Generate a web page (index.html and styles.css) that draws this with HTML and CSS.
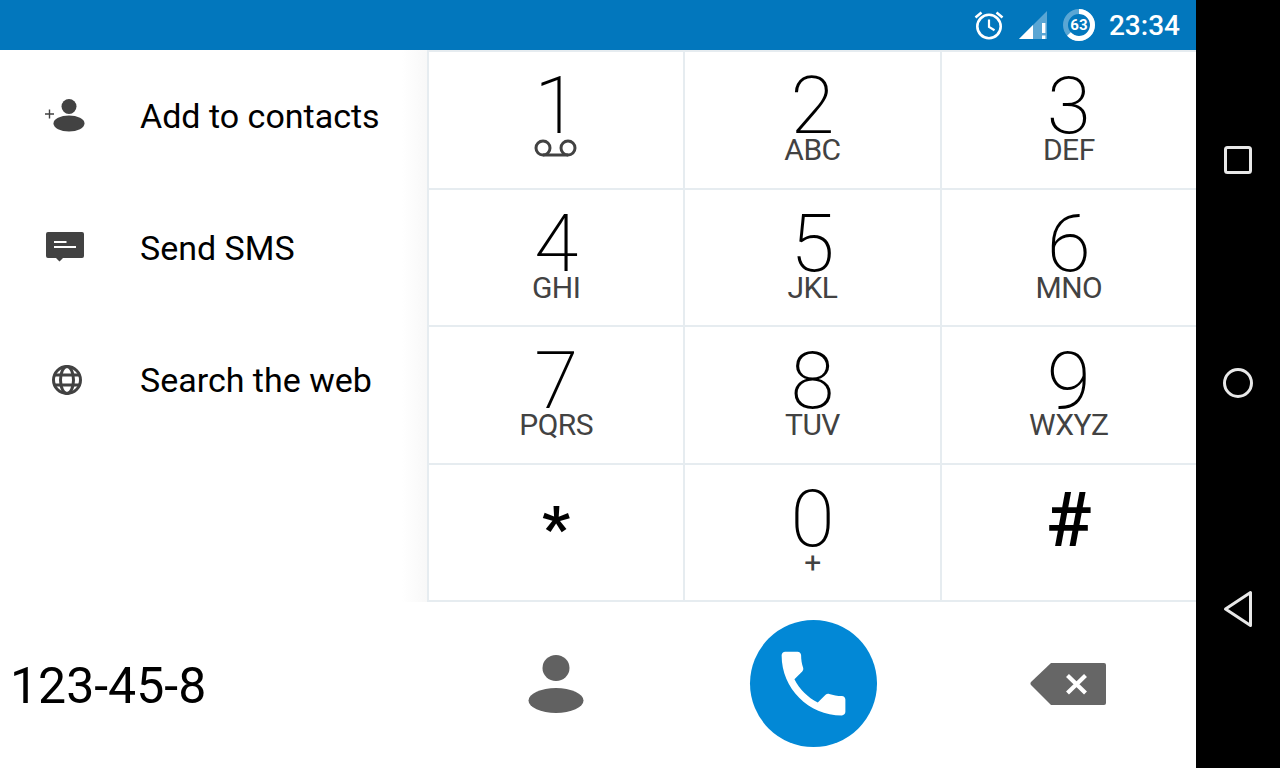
FILE: index.html
```html
<!DOCTYPE html>
<html lang="en">
<head>
    <meta charset="UTF-8">
    <meta name="viewport" content="width=device-width, initial-scale=1.0">
    <title>Dialer</title>
    <link rel="stylesheet" href="styles.css">
</head>
<body>
    <div class="screen">
        <div class="status-bar">
            <svg class="status-icon" width="30" height="32" viewBox="1 0 30 32">
                <circle cx="16" cy="17.5" r="11.7" fill="none" stroke="#fff" stroke-width="2.6"/>
                <path d="M16 10.5V18l5.5 3.3" fill="none" stroke="#fff" stroke-width="2.2"/>
                <path d="M2.5 8.5 8.5 3.5M29.5 8.5l-6-5" fill="none" stroke="#fff" stroke-width="2.6"/>
            </svg>
            <svg class="status-icon signal" width="30" height="30" viewBox="0 0 30 30">
                <path d="M1 29 29 1v28z" fill="#fff" opacity="0.35"/>
                <path d="M1 29 15 15v14z" fill="#fff"/>
                <path d="M24 13h3.4v10H24zM24 25.4h3.4V29H24z" fill="#fff"/>
            </svg>
            <div class="battery">
                <svg width="32" height="32" viewBox="0 0 32 32">
                    <circle cx="16" cy="16" r="13.5" fill="none" stroke="#fff" stroke-opacity="0.35" stroke-width="5"/>
                    <circle cx="16" cy="16" r="13.5" fill="none" stroke="#fff" stroke-width="5" stroke-dasharray="53.4 84.8" transform="rotate(-90 16 16)"/>
                </svg>
                <span class="battery-level">63</span>
            </div>
            <span class="clock">23:34</span>
        </div>
        <div class="content">
            <div class="actions">
                <div class="action">
                    <svg class="action-icon" width="40" height="36" viewBox="0 0 40 36">
                        <circle cx="24" cy="8.5" r="7.5" fill="#424242"/>
                        <ellipse cx="24" cy="25.5" rx="15.5" ry="8" fill="#424242"/>
                        <path d="M0 16h9M4.500 11.500v9" stroke="#424242" stroke-width="1.400"/>
                    </svg>
                    <span>Add to contacts</span>
                </div>
                <div class="action">
                    <svg class="action-icon" width="40" height="36" viewBox="0 0 40 36">
                        <path d="M3 2h34a2 2 0 0 1 2 2v22a2 2 0 0 1-2 2H18l-3.500 3.500-3.500-3.500H3a2 2 0 0 1-2-2V4a2 2 0 0 1 2-2z" fill="#424242"/>
                        <path d="M9 12h12.500M9 17h22" stroke="#fff" stroke-width="1.800"/>
                    </svg>
                    <span>Send SMS</span>
                </div>
                <div class="action">
                    <svg class="action-icon" width="40" height="36" viewBox="0 0 40 36">
                        <g fill="none" stroke="#424242" stroke-width="3">
                            <circle cx="22" cy="18" r="13.500"/>
                            <ellipse cx="22" cy="18" rx="6.500" ry="13.500"/>
                            <path d="M9.500 13h25M9.500 23h25"/>
                        </g>
                    </svg>
                    <span>Search the web</span>
                </div>
            </div>
            <div class="keypad">
                <div class="key">
                    <span class="digit">1</span>
                    <svg class="voicemail" width="44" height="20" viewBox="0 0 44 20">
                        <g fill="none" stroke="#424242" stroke-width="3">
                            <circle cx="9" cy="10" r="7"/>
                            <circle cx="34" cy="10" r="7"/>
                            <path d="M9 17h25"/>
                        </g>
                    </svg>
                </div>
                <div class="key"><span class="digit">2</span><span class="letters">ABC</span></div>
                <div class="key"><span class="digit">3</span><span class="letters">DEF</span></div>
                <div class="key"><span class="digit">4</span><span class="letters">GHI</span></div>
                <div class="key"><span class="digit">5</span><span class="letters">JKL</span></div>
                <div class="key"><span class="digit">6</span><span class="letters">MNO</span></div>
                <div class="key"><span class="digit">7</span><span class="letters">PQRS</span></div>
                <div class="key"><span class="digit">8</span><span class="letters">TUV</span></div>
                <div class="key"><span class="digit">9</span><span class="letters">WXYZ</span></div>
                <div class="key"><span class="star">*</span></div>
                <div class="key"><span class="digit">0</span><span class="letters">+</span></div>
                <div class="key"><span class="hash">#</span></div>
            </div>
        </div>
        <div class="bottom-bar">
            <div class="number">123-45-8</div>
            <div class="bottom-buttons">
                <div class="bottom-btn">
                    <svg width="56" height="58" viewBox="0 0 56 58">
                        <ellipse cx="28" cy="13" rx="13.500" ry="13" fill="#616161"/>
                        <ellipse cx="28" cy="45.500" rx="27.500" ry="12.500" fill="#616161"/>
                    </svg>
                </div>
                <div class="bottom-btn">
                    <div class="call-btn">
                        <svg width="85" height="85" viewBox="0 0 24 24">
                            <path d="M6.620 10.790c1.440 2.830 3.760 5.140 6.590 6.590l2.200-2.200c.27-.27.67-.36 1.020-.24 1.120.37 2.330.57 3.570.57.550 0 1 .45 1 1V20c0 .55-.45 1-1 1-9.390 0-17-7.610-17-17 0-.55.45-1 1-1h3.500c.55 0 1 .45 1 1 0 1.250.2 2.450.57 3.570.11.350.03.740-.25 1.020l-2.200 2.200z" fill="#fff"/>
                        </svg>
                    </div>
                </div>
                <div class="bottom-btn">
                    <svg width="76" height="44" viewBox="0 0 76 44">
                        <path d="M21 1h53a2 2 0 0 1 2 2v38a2 2 0 0 1-2 2H21L1 23a2.500 2.500 0 0 1 0-3z" fill="#666"/>
                        <path d="M37.500 13.500 55.500 31M55.500 13.500 37.500 31" stroke="#fff" stroke-width="4.200"/>
                    </svg>
                </div>
            </div>
        </div>
    </div>
    <div class="nav-bar">
        <svg width="30" height="30" viewBox="0 0 30 30">
            <rect x="2.500" y="2.500" width="25" height="25" rx="2" fill="none" stroke="#e8e8e8" stroke-width="3"/>
        </svg>
        <svg width="32" height="32" viewBox="0 0 32 32">
            <circle cx="16" cy="16" r="13.500" fill="none" stroke="#e8e8e8" stroke-width="3"/>
        </svg>
        <svg width="30" height="38" viewBox="0 0 30 38">
            <path d="M27.500 2.500v33L2.500 19z" fill="none" stroke="#e8e8e8" stroke-width="3" stroke-linejoin="round"/>
        </svg>
    </div>
</body>
</html>
```

FILE: styles.css
```css
body {
    margin: 0;
    width: 1280px;
    height: 768px;
    overflow: hidden;
    display: flex;
    font-family: Roboto, sans-serif;
    background-color: #fff;
}

.screen {
    width: 1196px;
    display: flex;
    flex-direction: column;
}

.status-bar {
    height: 50px;
    background-color: #0277bd;
    display: flex;
    justify-content: flex-end;
    align-items: center;
    padding-right: 16px;
    color: #fff;
}

.status-icon {
    margin-right: 14px;
}

.signal {
    margin-right: 15px;
}

.battery {
    width: 32px;
    height: 32px;
    position: relative;
    margin-right: 14px;
}

.battery-level {
    position: absolute;
    top: 0;
    left: 0;
    width: 32px;
    line-height: 32px;
    text-align: center;
    font-size: 15px;
    font-weight: 700;
}

.clock {
    font-size: 28px;
    font-weight: 500;
}

.content {
    display: flex;
    height: 552px;
}

.actions {
    width: 427px;
    background: linear-gradient(to right, #fff 402px, #f8f8f8 427px);
}

.action {
    height: 132px;
    display: flex;
    align-items: center;
    padding-left: 45px;
    font-size: 34px;
    color: #000;
}

.action-icon {
    margin-right: 55px;
}

.keypad {
    width: 769px;
    display: grid;
    grid-template-columns: repeat(3, 1fr);
    grid-template-rows: repeat(4, 1fr);
    box-sizing: border-box;
    border-bottom: 2px solid #e6ecf0;
}

.key {
    box-sizing: border-box;
    border-top: 2px solid #e6ecf0;
    border-left: 2px solid #e6ecf0;
    display: flex;
    flex-direction: column;
    align-items: center;
    color: #000;
}

.digit {
    font-size: 80px;
    font-weight: 200;
    line-height: 58px;
    margin-top: 25px;
}

.letters {
    font-size: 30px;
    font-weight: 400;
    letter-spacing: -0.5px;
    line-height: 22px;
    color: #424242;
    margin-top: 4px;
}

.voicemail {
    margin-top: 3px;
}

.star {
    font-size: 62px;
    font-weight: 700;
    line-height: 58px;
    margin-top: 35px;
}

.hash {
    font-size: 76px;
    font-weight: 500;
    line-height: 58px;
    margin-top: 26px;
}

.bottom-bar {
    flex: 1;
    display: flex;
    align-items: center;
    padding-bottom: 3px;
}

.number {
    width: 428px;
    box-sizing: border-box;
    padding: 5px 0 0 10px;
    font-size: 50px;
    color: #000;
}

.bottom-buttons {
    width: 768px;
    display: grid;
    grid-template-columns: repeat(3, 1fr);
}

.bottom-btn {
    display: flex;
    justify-content: center;
    align-items: center;
}

.call-btn {
    width: 127px;
    height: 127px;
    margin-left: 2px;
    border-radius: 50%;
    background-color: #0288d6;
    display: flex;
    justify-content: center;
    align-items: center;
}

.nav-bar {
    width: 84px;
    height: 768px;
    background-color: #000;
    display: flex;
    flex-direction: column;
    justify-content: space-between;
    align-items: center;
    box-sizing: border-box;
    padding: 145px 0 140px;
}
```
